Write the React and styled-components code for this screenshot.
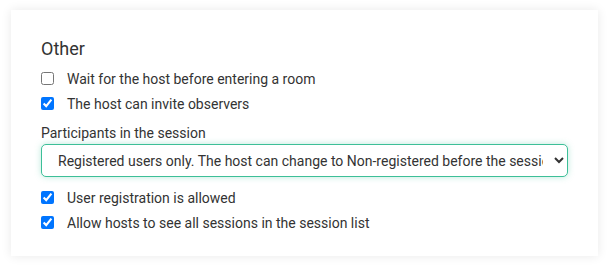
import React, { useState } from "react";
import styled, { createGlobalStyle } from "styled-components";

const GlobalStyle = createGlobalStyle`
  body {
    margin: 0;
    background: #fff;
    font-family: Roboto, "Liberation Sans", sans-serif;
    color: #333;
  }
`;

const Page = styled.div`
  padding: 10px 11px;
`;

const Card = styled.section`
  background: #fff;
  box-shadow: 0 0 10px rgba(0, 0, 0, 0.09);
  padding: 28px 30px 19px;
  height: 246px;
  box-sizing: border-box;
`;

const Heading = styled.h3`
  margin: 0 0 7px;
  font-size: 18px;
  font-weight: 400;
  line-height: 21px;
`;

const Row = styled.label`
  display: flex;
  align-items: center;
  height: 25px;
  font-size: 14px;
  gap: 13px;
  cursor: pointer;
`;

const Check = styled.input`
  width: 13px;
  height: 13px;
  margin: 0;
  accent-color: #0075ff;
`;

const FieldLabel = styled.div`
  margin: 9px 0 3px;
  font-size: 14px;
  line-height: 16px;
`;

const Select = styled.select`
  display: block;
  width: 100%;
  height: 33px;
  box-sizing: border-box;
  padding: 0 8px 0 12px;
  font-family: inherit;
  font-size: 14px;
  color: #333;
  background: #fff;
  border: 1px solid #3dbf98;
  border-radius: 5px;
  box-shadow: 0 0 6px rgba(61, 191, 152, 0.35);
  outline: none;
  margin-bottom: 8px;
`;

const Option = ({ value, checked, onChange, children }) => (
  <Row>
    <Check type="checkbox" checked={checked} onChange={onChange} value={value} />
    {children}
  </Row>
);

export default function App() {
  const [opts, setOpts] = useState({
    wait: false,
    observers: true,
    registration: true,
    allSessions: true,
  });
  const [participants, setParticipants] = useState("registered");

  const toggle = (key) => () => setOpts((o) => ({ ...o, [key]: !o[key] }));

  return (
    <Page>
      <GlobalStyle />
      <Card>
        <Heading>Other</Heading>
        <Option checked={opts.wait} onChange={toggle("wait")}>
          Wait for the host before entering a room
        </Option>
        <Option checked={opts.observers} onChange={toggle("observers")}>
          The host can invite observers
        </Option>
        <FieldLabel>Participants in the session</FieldLabel>
        <Select value={participants} onChange={(e) => setParticipants(e.target.value)}>
          <option value="registered">
            Registered users only. The host can change to Non-registered before the session starts
          </option>
          <option value="anyone">Anyone can join the session</option>
        </Select>
        <Option checked={opts.registration} onChange={toggle("registration")}>
          User registration is allowed
        </Option>
        <Option checked={opts.allSessions} onChange={toggle("allSessions")}>
          Allow hosts to see all sessions in the session list
        </Option>
      </Card>
    </Page>
  );
}
